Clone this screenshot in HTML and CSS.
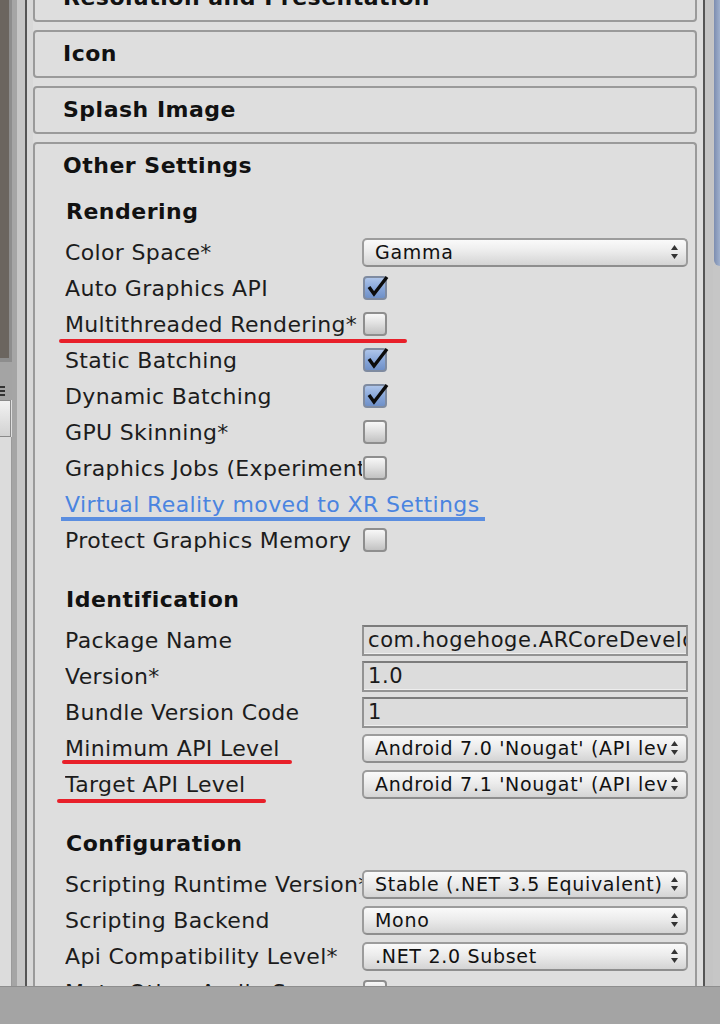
FILE: index.html
```html
<!DOCTYPE html>
<html>
<head>
<meta charset="utf-8">
<link rel="stylesheet" href="styles.css">
</head>
<body>
<div class="screen">
  <div class="main">
    <div class="leftside">
      <div class="scenepanel">
        <div class="scene"></div>
        <div class="lp-tools"><span class="hamb"></span></div>
        <div class="lp-tab"></div>
        <div class="lp-rest"></div>
      </div>
      <div class="st st-a"></div>
      <div class="st st-b"></div>
      <div class="st st-dark"></div>
      <div class="st st-c"></div>
    </div>

    <div class="inspector">
      <section class="fold"><div class="fold-head">Resolution and Presentation</div></section>
      <section class="fold"><div class="fold-head">Icon</div></section>
      <section class="fold"><div class="fold-head">Splash Image</div></section>
      <section class="fold open">
        <div class="fold-head">Other Settings</div>
        <div class="fold-body">
          <div class="sec-head">Rendering</div>
          <div class="row"><span class="label">Color Space*</span>
            <div class="popup"><span class="ptext">Gamma</span><svg class="arr" width="7" height="14" viewBox="0 0 7 14"><polygon points="3.5,0 7,5 0,5"/><polygon points="0,9 7,9 3.5,14"/></svg></div></div>
          <div class="row"><span class="label">Auto Graphics API</span>
            <span class="cb on"><svg width="28" height="28" viewBox="0 0 28 28"><polyline points="6,13 11,20 24,3" /></svg></span></div>
          <div class="row"><span class="label">Multithreaded Rendering*</span><span class="cb"></span></div>
          <div class="row"><span class="label">Static Batching</span>
            <span class="cb on"><svg width="28" height="28" viewBox="0 0 28 28"><polyline points="6,13 11,20 24,3" /></svg></span></div>
          <div class="row"><span class="label">Dynamic Batching</span>
            <span class="cb on"><svg width="28" height="28" viewBox="0 0 28 28"><polyline points="6,13 11,20 24,3" /></svg></span></div>
          <div class="row"><span class="label">GPU Skinning*</span><span class="cb"></span></div>
          <div class="row"><span class="label">Graphics Jobs (Experimental)*</span><span class="cb"></span></div>
          <div class="row"><span class="label link">Virtual Reality moved to XR Settings</span></div>
          <div class="row"><span class="label">Protect Graphics Memory</span><span class="cb"></span></div>

          <div class="sec-head spaced">Identification</div>
          <div class="row"><span class="label">Package Name</span><div class="field">com.hogehoge.ARCoreDevelop</div></div>
          <div class="row"><span class="label">Version*</span><div class="field">1.0</div></div>
          <div class="row"><span class="label">Bundle Version Code</span><div class="field">1</div></div>
          <div class="row"><span class="label">Minimum API Level</span>
            <div class="popup"><span class="ptext">Android 7.0 'Nougat' (API level 24)</span><svg class="arr" width="7" height="14" viewBox="0 0 7 14"><polygon points="3.5,0 7,5 0,5"/><polygon points="0,9 7,9 3.5,14"/></svg></div></div>
          <div class="row"><span class="label">Target API Level</span>
            <div class="popup"><span class="ptext">Android 7.1 'Nougat' (API level 25)</span><svg class="arr" width="7" height="14" viewBox="0 0 7 14"><polygon points="3.5,0 7,5 0,5"/><polygon points="0,9 7,9 3.5,14"/></svg></div></div>

          <div class="sec-head spaced">Configuration</div>
          <div class="row"><span class="label">Scripting Runtime Version*</span>
            <div class="popup"><span class="ptext">Stable (.NET 3.5 Equivalent)</span><svg class="arr" width="7" height="14" viewBox="0 0 7 14"><polygon points="3.5,0 7,5 0,5"/><polygon points="0,9 7,9 3.5,14"/></svg></div></div>
          <div class="row"><span class="label">Scripting Backend</span>
            <div class="popup"><span class="ptext">Mono</span><svg class="arr" width="7" height="14" viewBox="0 0 7 14"><polygon points="3.5,0 7,5 0,5"/><polygon points="0,9 7,9 3.5,14"/></svg></div></div>
          <div class="row"><span class="label">Api Compatibility Level*</span>
            <div class="popup"><span class="ptext">.NET 2.0 Subset</span><svg class="arr" width="7" height="14" viewBox="0 0 7 14"><polygon points="3.5,0 7,5 0,5"/><polygon points="0,9 7,9 3.5,14"/></svg></div></div>
          <div class="row"><span class="label">Mute Other Audio Sources*</span><span class="cb"></span></div>
        </div>
      </section>
    </div>

    <div class="rightside">
      <div class="rs-gap"></div>
      <div class="rs-dark"></div>
      <div class="rs-light"></div>
      <div class="scroll"><div class="thumb"></div></div>
    </div>
  </div>
  <div class="bottombar"></div>

  <div class="mark mark-multi"></div>
  <div class="mark mark-vr"></div>
  <div class="mark mark-min"></div>
  <div class="mark mark-target"></div>
</div>
</body>
</html>
```

FILE: styles.css
```css
* { box-sizing: border-box; }
html, body { margin: 0; padding: 0; }
body {
  background: #dedede;
  font-family: "DejaVu Sans", "Liberation Sans", sans-serif;
  color: #1c1c1c;
  overflow: hidden;
}
.screen {
  position: relative;
  width: 720px;
  height: 1024px;
  display: flex;
  flex-direction: column;
  overflow: hidden;
}
.main {
  height: 986px;
  display: flex;
  overflow: hidden;
}

/* left strip */
.leftside { display: flex; width: 33px; flex: none; }
.scenepanel { width: 12px; display: flex; flex-direction: column; }
.scene {
  height: 362px;
  background: #6b655f;
  border-right: 3px solid #8d8d8d;
  border-bottom: 4px solid #8d8d8d;
}
.lp-tools {
  height: 38px;
  background: #a4a4a4;
  display: flex;
  align-items: flex-end;
  padding-bottom: 4px;
}
.hamb {
  width: 5px;
  height: 10px;
  background: linear-gradient(#333 0 2px, transparent 2px 4px, #333 4px 6px, transparent 6px 8px, #333 8px 10px);
}
.lp-tab {
  height: 37px;
  background: linear-gradient(#f2f2f2, #d2d2d2);
  border: 1px solid #8a8a8a;
  border-left: none;
  margin-right: 1px;
}
.lp-rest {
  flex: 1;
  background: #dcdcdc;
  border-right: 1px solid #9a9a9a;
}
.st { height: 100%; }
.st-a { width: 5px; background: #a5a5a5; }
.st-b { width: 8px; background: #c6c6c6; }
.st-dark { width: 2px; background: #555; }
.st-c { width: 6px; background: #d8d8d8; }

/* inspector */
.inspector {
  width: 664px;
  flex: none;
  margin-top: -26px;
  display: flex;
  flex-direction: column;
  gap: 8px;
}
.fold {
  border: 2px solid #9a9a9a;
  border-radius: 4px;
  background: #dedede;
}
.fold-head {
  height: 44px;
  line-height: 44px;
  padding-left: 28px;
  font-weight: bold;
  font-size: 22px;
  letter-spacing: 0.5px;
  color: #111;
  white-space: nowrap;
}
.fold.open { flex: 1; border-bottom: none; }
.fold-body { padding: 6px 7px 0 30px; }

.sec-head {
  height: 36px;
  line-height: 36px;
  font-weight: bold;
  font-size: 22px;
  letter-spacing: 0.5px;
  color: #111;
  margin-bottom: 4px;
  padding-left: 1px;
}
.sec-head.spaced { margin-top: 24px; }

.row {
  height: 36px;
  display: grid;
  grid-template-columns: 297px 326px;
  align-items: center;
}
.label {
  font-size: 22px;
  letter-spacing: 0.35px;
  white-space: nowrap;
  overflow: hidden;
}
.label.link { color: #4a84e0; overflow: visible; letter-spacing: 0.4px; }

/* popup */
.popup {
  height: 29px;
  border: 2px solid #9c9c9c;
  border-bottom-color: #8e8e8e;
  border-radius: 5px;
  background: linear-gradient(#fafafa, #ececec 45%, #d4d4d4);
  display: flex;
  align-items: center;
  padding: 0 8px 0 11px;
  gap: 4px;
  overflow: hidden;
}
.ptext {
  flex: 1;
  font-size: 19px;
  letter-spacing: 0.7px;
  white-space: nowrap;
  overflow: hidden;
  color: #111;
}
.arr { flex: none; fill: #333; }

/* checkbox */
.cb {
  position: relative;
  width: 24px;
  height: 24px;
  margin-left: 1px;
  border: 2px solid #8e8e8e;
  border-radius: 4px;
  background: linear-gradient(#f8f8f8, #e4e4e4 40%, #c2c2c2);
}
.cb.on {
  border-color: #7f8ba0;
  background: linear-gradient(#aec5ea, #86a5d8 55%, #6f90c8);
}
.cb svg {
  position: absolute;
  left: -2px;
  top: -4px;
  fill: none;
  stroke: #0c0c0c;
  stroke-width: 3.4;
  stroke-linejoin: miter;
}

/* text field */
.field {
  height: 31px;
  border: 2px solid #939393;
  border-top-color: #7c7c7c;
  background: #dcdcdc;
  box-shadow: inset 0 -1px 0 #eeeeee;
  font-size: 21px;
  letter-spacing: 0.6px;
  line-height: 27px;
  padding-left: 4px;
  white-space: nowrap;
  overflow: hidden;
  color: #1a1a1a;
}

/* right strip */
.rightside { display: flex; width: 23px; flex: none; }
.rs-gap { width: 6px; }
.rs-dark { width: 2px; background: #555; }
.rs-light { width: 8px; background: #c4c4c4; }
.scroll { width: 7px; background: #c6c6c6; }
.thumb {
  height: 266px;
  margin-left: 1px;
  background: linear-gradient(90deg, #7c8db0, #9fb0cd);
  border-bottom-left-radius: 6px;
}

.bottombar {
  height: 38px;
  background: #a4a4a4;
  border-top: 1px solid #8e8e8e;
}

/* annotation marks drawn over the screenshot */
.mark {
  position: absolute;
  height: 4px;
  border-radius: 2px;
  background: #e8202a;
}
.mark-multi { left: 59px; top: 339px; width: 348px; }
.mark-min { left: 62px; top: 760px; width: 230px; }
.mark-target { left: 57px; top: 799px; width: 209px; }
.mark-vr { left: 61px; top: 517px; width: 424px; background: #5b8ee0; border-radius: 0; }
```
